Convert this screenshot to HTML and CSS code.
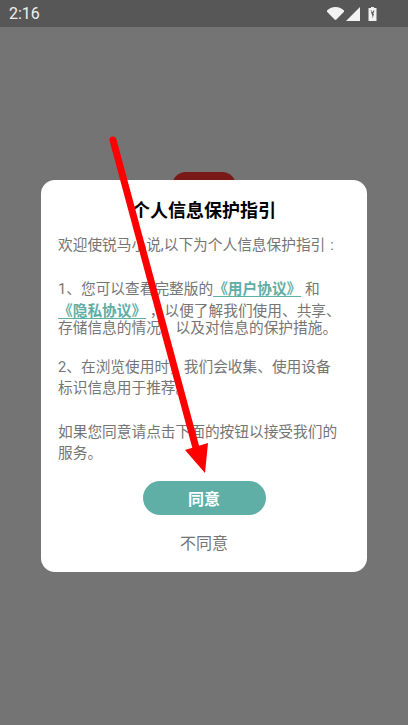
FILE: index.html
```html
<!DOCTYPE html>
<html lang="zh">
<head>
<meta charset="utf-8">
<title>个人信息保护指引</title>
<link rel="stylesheet" href="styles.css">
</head>
<body>
<div class="screen">
  <header class="status">
    <span class="time">2:16</span>
    <span class="icons">
      <svg class="wifi" viewBox="0 0 17 13"><path d="M0 3.600C1.800 1.500 5 0 8.500 0S15.200 1.500 17 3.600c.3.400.3.800 0 1.100L9.400 12.600c-.5.500-1.300.5-1.800 0L0 4.700c-.3-.3-.3-.7 0-1.100z"/></svg>
      <svg class="signal" viewBox="0 0 14 14"><path d="M14 0v14H0z"/></svg>
      <svg class="battery" viewBox="0 0 9 14"><path fill-rule="evenodd" d="M3 0h3v1h2.500v13H.5V1H3zM2.500 3.500l1.500 1.500H3L4.500 9v2.500L6 7H5.200L6.500 3.500H5.500L4.500 5.500 3.800 3.500z"/></svg>
    </span>
  </header>
  <main class="stage">
    <div class="logo"></div>
    <section class="dialog">
      <h1 class="title">个人信息保护指引</h1>
      <p class="line first">欢迎使锐马小说,以下为个人信息保护指引<span class="colon">:</span></p>
      <p class="line gap-a">1、您可以查看完整版的<a class="link">《用户协议》</a> 和</p>
      <p class="line link-line"><a class="link">《隐私协议》</a> ，以便了解我们使用、共享、</p>
      <p class="line tight">存储信息的情况，以及对信息的保护措施。</p>
      <p class="line gap-b">2、在浏览使用时，我们会收集、使用设备</p>
      <p class="line">标识信息用于推荐。</p>
      <p class="line gap-c">如果您同意请点击下面的按钮以接受我们的</p>
      <p class="line">服务。</p>
      <button class="agree">同意</button>
      <button class="decline">不同意</button>
    </section>
  </main>
  <svg class="arrow" viewBox="0 0 408 725">
    <path class="shaft" d="M113 140L196 448"/>
    <path class="head" d="M185 450L208 443L205 473z"/>
  </svg>
</div>
</body>
</html>
```
FILE: styles.css
```css
* { box-sizing: border-box; }
html, body { margin: 0; height: 100%; }
body { font-family: "Roboto", "Noto Sans CJK SC", sans-serif; background: #747474; }
.screen { position: relative; width: 408px; height: 725px; overflow: hidden; display: flex; flex-direction: column; background: #747474; }
.status { height: 27px; flex: none; background: #575757; color: #f0f0f0; display: flex; align-items: center; justify-content: space-between; padding: 0 31px 0 9px; }
.time { font-size: 16px; font-weight: 400; }
.icons { display: flex; align-items: center; gap: 2px; }
.icons svg { fill: #f2f2f2; display: block; }
.wifi { width: 17px; height: 13px; }
.signal { width: 14px; height: 14px; margin-right: 6px; }
.battery { width: 9px; height: 14px; }
.stage { flex: 1; position: relative; display: flex; justify-content: center; padding-top: 153px; }
.logo { position: absolute; top: 145px; left: 172px; width: 64px; height: 64px; border-radius: 14px; background: #7a1a17; }
.dialog { position: relative; width: 326px; height: 392px; background: #fff; border-radius: 14px; padding: 20px 17px 0; display: flex; flex-direction: column; }
.title { margin: 0; font-size: 18px; line-height: 22px; font-weight: 700; color: #000; text-align: center; }
.line { margin: 0; font-size: 14.7px; line-height: 21px; color: #757575; white-space: nowrap; }
.colon { margin-left: 5px; }
.first { margin-top: 13px; }
.gap-a { margin-top: 23px; }
.link-line { margin-top: 3px; line-height: 17px; }
.tight { line-height: 17px; }
.gap-b { margin-top: 20px; }
.gap-c { margin-top: 23px; }
.link { color: #5eaea6; font-weight: 700; text-decoration: underline 1px #5eaea6; text-underline-offset: 2px; text-decoration-skip-ink: none; }
.agree { align-self: center; margin-top: 17px; width: 123px; height: 34px; border: 0; border-radius: 17px; background: #5fafa7; color: #fff; font: 700 16px "Roboto", "Noto Sans CJK SC", sans-serif; }
.decline { align-self: center; margin-top: 18px; padding: 0; border: 0; background: none; color: #757575; font: 400 16px/22px "Roboto", "Noto Sans CJK SC", sans-serif; }
.arrow { position: absolute; inset: 0; width: 408px; height: 725px; pointer-events: none; }
.shaft { stroke: #fe0000; stroke-width: 7; stroke-linecap: round; fill: none; }
.head { fill: #fe0000; }
```
